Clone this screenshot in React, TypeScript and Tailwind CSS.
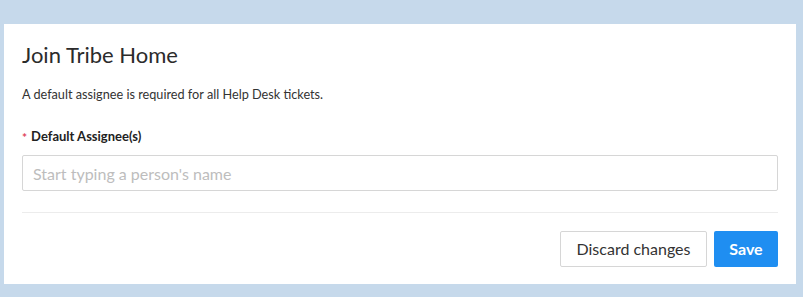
export default function App() {
  return (
    <div className="h-[297px] w-[803px] bg-[#c6d9eb] pt-6 pl-1" style={{ fontFamily: 'Lato, "Open Sans", sans-serif' }}>
      <div className="h-[260px] w-[792px] bg-white px-[18px] pt-[17px]">
        <h2 className="text-[22px] leading-[28px] text-[#2b2b2b]">Join Tribe Home</h2>
        <p className="mt-[16px] text-[12.7px] leading-[18px] text-[#333]">
          A default assignee is required for all Help Desk tickets.
        </p>
        <label className="mt-[25px] flex items-center gap-[4px] text-[13px] font-bold leading-[16px] text-[#222]">
          <span className="text-[#e0425a] text-[12px] leading-none mt-[3px]">*</span>
          Default Assignee(s)
        </label>
        <input
          className="mt-[11px] block h-[36px] w-[756px] rounded-[2px] border border-[#d6d6d6] px-[10px] text-[16px] text-[#333] placeholder:text-[#bdbdbd] outline-none"
          placeholder="Start typing a person's name"
        />
        <div className="mt-[21px] h-px w-[756px] bg-[#ececec]" />
        <div className="mt-[18px] flex w-[756px] justify-end gap-[7px]">
          <button className="h-[36px] w-[147px] rounded-[2px] border border-[#d6d6d6] bg-white text-[16px] text-[#333]">
            Discard changes
          </button>
          <button className="h-[36px] w-[64px] rounded-[2px] bg-[#1f8ef1] text-[16px] font-bold text-white">
            Save
          </button>
        </div>
      </div>
    </div>
  );
}
